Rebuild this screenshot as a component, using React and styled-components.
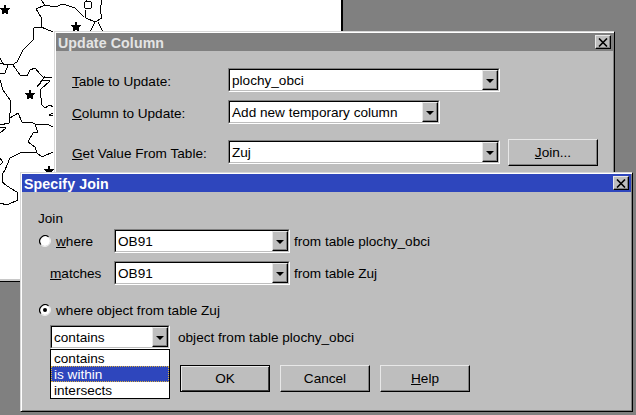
import React from "react";
import styled, { createGlobalStyle } from "styled-components";

const GlobalStyle = createGlobalStyle`
  html, body { margin: 0; padding: 0; background: #808080; }
  body { font-family: "Liberation Sans", Arial, sans-serif; font-size: 13.6px; color: #000; }
`;

const Desktop = styled.div`
  position: relative;
  width: 636px;
  height: 415px;
  overflow: hidden;
  background: #808080;
`;

const MapWindow = styled.div`
  position: absolute;
  left: -4px;
  top: -4px;
  width: 345px;
  height: 285px;
  background: #fff;
  border-right: 2px solid #000;
  border-bottom: 1px solid #000;
  box-shadow: inset 0 -2px #c8c8c8;
`;

const MapSvg = styled.svg`
  display: block;
  margin: 4px 0 0 4px;
`;

const Dialog = styled.div`
  position: absolute;
  left: ${(p) => p.$x}px;
  top: ${(p) => p.$y}px;
  width: ${(p) => p.$w}px;
  height: ${(p) => p.$h}px;
  box-sizing: border-box;
  padding: 1px;
  background: #bebebe;
  border: 1px solid;
  border-color: #d8d8d8 #000 #000 #d8d8d8;
  box-shadow: inset 1px 1px #fff, inset -1px -1px #808080;
`;

const TitleBar = styled.div`
  display: flex;
  align-items: center;
  justify-content: space-between;
  height: 18px;
  padding: 0 2px;
  background: ${(p) => (p.$active ? "#2e46bd" : "#808080")};
  color: ${(p) => (p.$active ? "#fff" : "#e4e4e4")};
  font-weight: bold;
  font-size: 14.2px;
  letter-spacing: 0.1px;
`;

const TitleText = styled.span`
  position: relative;
  top: 1px;
`;

const Raised = styled.div`
  box-sizing: border-box;
  display: flex;
  align-items: center;
  justify-content: center;
  background: #bebebe;
  border: 1px solid;
  border-color: #e8e8e8 #000 #000 #e8e8e8;
  box-shadow: inset -1px -1px #808080;
`;

const CloseButton = styled(Raised)`
  width: 16px;
  height: 14px;
`;

const UpdateBody = styled.div`
  padding: 17px 0 0 16px;
`;

const UpdateRow = styled.div`
  display: flex;
  align-items: center;
  height: 24px;
  margin-top: ${(p) => p.$gap || 0}px;
`;

const UpdateLabel = styled.div`
  width: 156px;
  padding-top: 2px;
  white-space: nowrap;
`;

const Key = styled.span`
  text-decoration: underline;
`;

const ComboBox = styled.div`
  box-sizing: border-box;
  position: relative;
  display: flex;
  align-items: stretch;
  flex: none;
  width: ${(p) => p.$w}px;
  height: 24px;
  background: #fff;
  border: 1px solid;
  border-color: #808080 #fff #fff #808080;
`;

const ComboInner = styled.div`
  flex: 1;
  display: flex;
  align-items: center;
  justify-content: space-between;
  border: 1px solid;
  border-color: #000 #bebebe #bebebe #000;
  padding-left: 2px;
  min-width: 0;
  white-space: nowrap;
`;

const ArrowButton = styled(Raised)`
  width: 16px;
  height: 100%;
  flex: none;
`;

const Arrow = styled.span`
  width: 0;
  height: 0;
  border-left: 4px solid transparent;
  border-right: 4px solid transparent;
  border-top: 4px solid #000;
  margin-top: 1px;
`;

const PushButton = styled(Raised)`
  width: 90px;
  height: 27px;
  flex: none;
  ${(p) =>
    p.$default &&
    "border-color: #000; box-shadow: inset 1px 1px #e8e8e8, inset -1px -1px #404040;"}
`;

const JoinButton = styled(PushButton)`
  margin-left: 8px;
`;

const JoinBody = styled.div`
  padding: 18px 0 0 16px;
`;

const PlainLine = styled.div`
  height: 16px;
  line-height: 17px;
`;

const FieldRow = styled.div`
  display: flex;
  align-items: center;
  height: 24px;
  margin-top: ${(p) => p.$gap || 0}px;
`;

const FieldLabel = styled.div`
  display: flex;
  align-items: center;
  width: 76px;
  flex: none;
  padding-left: ${(p) => p.$indent || 0}px;
  box-sizing: border-box;
`;

const RadioLine = styled.div`
  display: flex;
  align-items: center;
  height: 16px;
  margin-top: ${(p) => p.$gap}px;
`;

const RadioSvg = styled.svg`
  flex: none;
  margin: 0 5px 0 1px;
`;

const SideText = styled.span`
  margin-left: ${(p) => p.$gap}px;
  white-space: nowrap;
`;

const OperatorRow = styled(FieldRow)`
  padding-left: 12px;
`;

const Dropdown = styled.ul`
  position: absolute;
  left: -1px;
  top: 23px;
  width: 120px;
  box-sizing: border-box;
  margin: 0;
  padding: 0;
  list-style: none;
  background: #fff;
  border: 1px solid #000;
  z-index: 2;
`;

const DropdownItem = styled.li`
  box-sizing: border-box;
  height: 16px;
  line-height: 17px;
  padding-left: 3px;
  ${(p) =>
    p.$selected &&
    "background: #2e46bd; color: #fff; outline: 1px dotted #d8b040; outline-offset: -1px;"}
`;

const ButtonRow = styled.div`
  display: flex;
  gap: 10px;
  margin: 16px 0 0 142px;
`;

const lines = [
  "41,0 45,5 36,9 41,17 41,27 53,32",
  "45,5 55,7 63,4 75,8 84,17",
  "41,27 34,28 33,40 30,43 23,50 17,62 12,65 3,64 0,58",
  "85,10 86,18 95,22 102,18 100,10 102,0",
  "88,9 85,3 87,0",
  "95,22 90,32",
  "98,22 103,32",
  "0,63 8,65 5,73 0,73",
  "13,65 20,75 27,76 30,70 35,68 40,74 43,77 52,77",
  "45,76 37,87 43,80 50,81 40,90 42,105 45,108 50,105 53,107",
  "53,113 49,115 53,116",
  "0,80 3,90 10,100 10,113 9,123 0,125",
  "0,127 6,128 0,133",
  "10,118 18,113 22,122 33,123 37,125 47,124 53,127",
  "35,125 38,132 33,133 28,142 35,147 37,153 42,157 53,152",
  "37,153 22,152 10,158 5,170 2,175 2,182 10,188 17,192 18,200 7,205 0,203",
  "0,158 3,162 0,165",
];

const stars = [
  [5, 10],
  [76, 27],
  [30, 95],
  [49, 171],
];

const starPoints = (cx, cy, r = 6) =>
  Array.from({ length: 10 }, (_, i) => {
    const a = -Math.PI / 2 + (i * Math.PI) / 5;
    const d = i % 2 ? r * 0.42 : r;
    return `${cx + d * Math.cos(a)},${cy + d * Math.sin(a)}`;
  }).join(" ");

const MapDrawing = () => (
  <MapSvg width="341" height="278" viewBox="0 0 341 278" shapeRendering="crispEdges">
    {lines.map((pts) => (
      <polyline key={pts} points={pts} fill="none" stroke="#000" strokeWidth="1" />
    ))}
    <circle cx="88" cy="5" r="4" fill="#fff" stroke="#000" />
    {stars.map(([x, y]) => (
      <polygon key={x} points={starPoints(x, y)} fill="#000" />
    ))}
  </MapSvg>
);

const CloseIcon = () => (
  <svg width="10" height="9" viewBox="0 0 10 9">
    <path d="M1 0.5 L9 8.5 M9 0.5 L1 8.5" stroke="#000" strokeWidth="1.6" fill="none" />
  </svg>
);

const Radio = ({ checked }) => (
  <RadioSvg width="12" height="12" viewBox="0 0 12 12">
    <circle cx="6" cy="6" r="5" fill="#fff" />
    <path d="M1.8 9.5 A5.5 5.5 0 0 1 9.5 1.8" stroke="#000" strokeWidth="1.2" fill="none" />
    <path d="M10.2 2.5 A5.5 5.5 0 0 1 2.5 10.2" stroke="#e8e8e8" strokeWidth="1.2" fill="none" />
    {checked && <circle cx="6" cy="6" r="2" fill="#000" />}
  </RadioSvg>
);

const Combo = ({ w, value, children }) => (
  <ComboBox $w={w}>
    <ComboInner>
      {value}
      <ArrowButton>
        <Arrow />
      </ArrowButton>
    </ComboInner>
    {children}
  </ComboBox>
);

export default function App() {
  return (
    <Desktop>
      <GlobalStyle />
      <MapWindow>
        <MapDrawing />
      </MapWindow>

      <Dialog $x={54} $y={31} $w={561} $h={150}>
        <TitleBar>
          <TitleText>Update Column</TitleText>
          <CloseButton>
            <CloseIcon />
          </CloseButton>
        </TitleBar>
        <UpdateBody>
          <UpdateRow>
            <UpdateLabel>
              <Key>T</Key>able to Update:
            </UpdateLabel>
            <Combo w={272} value="plochy_obci" />
          </UpdateRow>
          <UpdateRow $gap={8}>
            <UpdateLabel>
              <Key>C</Key>olumn to Update:
            </UpdateLabel>
            <Combo w={212} value="Add new temporary column" />
          </UpdateRow>
          <UpdateRow $gap={16}>
            <UpdateLabel>
              <Key>G</Key>et Value From Table:
            </UpdateLabel>
            <Combo w={272} value="Zuj" />
            <JoinButton>
              <span>
                <Key>J</Key>oin...
              </span>
            </JoinButton>
          </UpdateRow>
        </UpdateBody>
      </Dialog>

      <Dialog $x={20} $y={172} $w={613} $h={240}>
        <TitleBar $active>
          <TitleText>Specify Join</TitleText>
          <CloseButton>
            <CloseIcon />
          </CloseButton>
        </TitleBar>
        <JoinBody>
          <PlainLine>Join</PlainLine>
          <FieldRow $gap={3}>
            <FieldLabel>
              <Radio />
              <span>
                <Key>w</Key>here
              </span>
            </FieldLabel>
            <Combo w={176} value="OB91" />
            <SideText $gap={4}>from table plochy_obci</SideText>
          </FieldRow>
          <FieldRow $gap={8}>
            <FieldLabel $indent={12}>
              <span>
                <Key>m</Key>atches
              </span>
            </FieldLabel>
            <Combo w={176} value="OB91" />
            <SideText $gap={4}>from table Zuj</SideText>
          </FieldRow>
          <RadioLine $gap={17}>
            <Radio checked />
            <span>where object from table Zuj</span>
          </RadioLine>
          <OperatorRow $gap={7}>
            <Combo w={120} value="contains">
              <Dropdown>
                <DropdownItem>contains</DropdownItem>
                <DropdownItem $selected>is within</DropdownItem>
                <DropdownItem>intersects</DropdownItem>
              </Dropdown>
            </Combo>
            <SideText $gap={8}>object from table plochy_obci</SideText>
          </OperatorRow>
          <ButtonRow>
            <PushButton $default>OK</PushButton>
            <PushButton>Cancel</PushButton>
            <PushButton>
              <span>
                <Key>H</Key>elp
              </span>
            </PushButton>
          </ButtonRow>
        </JoinBody>
      </Dialog>
    </Desktop>
  );
}
